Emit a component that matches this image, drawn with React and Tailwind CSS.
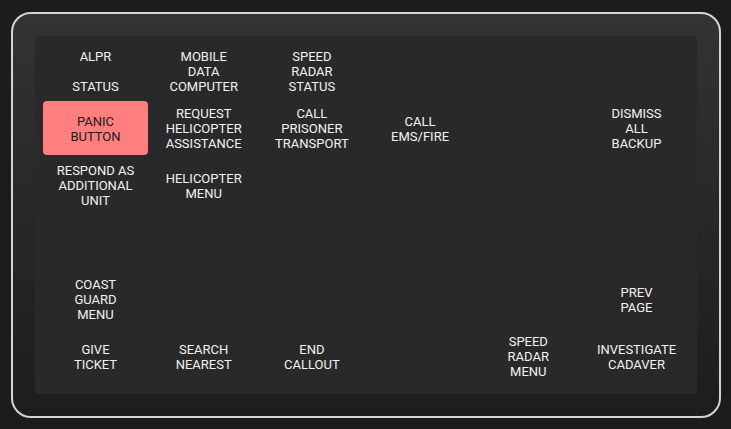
import React from "react";

const cells = [
  // row 1
  ["ALPR", "\u00a0", "STATUS"], ["MOBILE", "DATA", "COMPUTER"], ["SPEED", "RADAR", "STATUS"], null, null, null,
  // row 2
  "PANIC", ["REQUEST", "HELICOPTER", "ASSISTANCE"], ["CALL", "PRISONER", "TRANSPORT"], ["CALL", "EMS/FIRE"], null, ["DISMISS", "ALL", "BACKUP"],
  // row 3
  ["RESPOND AS", "ADDITIONAL", "UNIT"], ["HELICOPTER", "MENU"], null, null, null, null,
  // row 4
  null, null, null, null, null, null,
  // row 5
  ["COAST", "GUARD", "MENU"], null, null, null, null, ["PREV", "PAGE"],
  // row 6
  ["GIVE", "TICKET"], ["SEARCH", "NEAREST"], ["END", "CALLOUT"], null, ["SPEED", "RADAR", "MENU"], ["INVESTIGATE", "CADAVER"],
];

export default function App() {
  return (
    <div className="w-[731px] h-[429px] bg-[#1c1c1c] pt-[12px] pl-[11px] overflow-hidden" style={{ fontFamily: "Roboto, 'Liberation Sans', sans-serif" }}>
      <div className="w-[710px] h-[406px] border-2 border-[#d4d4d4] rounded-[20px] p-[22px] bg-gradient-to-b from-[#333333] to-[#1d1d1d]">
        <div className="w-[662px] h-[358px] bg-[#292929] pt-[8px] px-[8px]">
          <div className="grid grid-cols-6 grid-rows-[repeat(6,54px)] gap-x-[3.2px] gap-y-[3px]">
            {cells.map((c, i) => {
              if (c === "PANIC") {
                return (
                  <div key={i} className="bg-[#ff7f7f] rounded-[4px] flex flex-col items-center justify-center pt-[1px] text-[13px] leading-[15px] text-[#1a1a1a] text-center">
                    <span>PANIC</span>
                    <span>BUTTON</span>
                  </div>
                );
              }
              return (
                <div key={i} className="flex flex-col items-center justify-center pt-[1px] text-[13px] leading-[15px] text-[#f2f2f2] text-center">
                  {c && c.map((l, j) => <span key={j}>{l}</span>)}
                </div>
              );
            })}
          </div>
        </div>
      </div>
    </div>
  );
}
